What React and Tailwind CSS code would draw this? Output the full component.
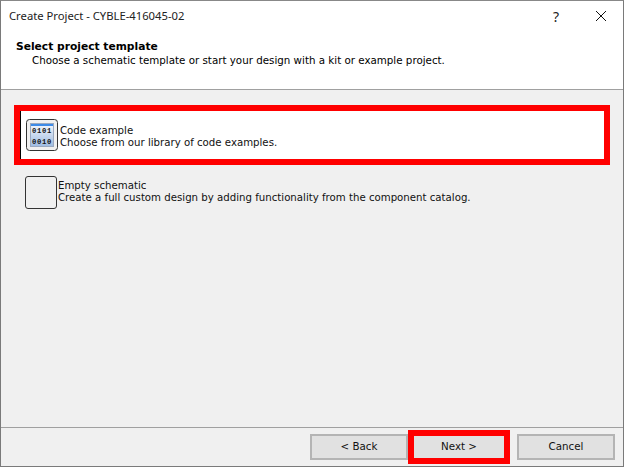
const ui = { fontFamily: '"DejaVu Sans", sans-serif' };

function CodeIcon() {
  return (
    <svg width="32" height="32" viewBox="0 0 32 32" className="shrink-0">
      <rect x="0.5" y="0.5" width="31" height="31" rx="3" fill="#f0f0f0" stroke="#333" />
      <defs>
        <linearGradient id="g" x1="0" y1="0" x2="0" y2="1">
          <stop offset="0" stopColor="#f6f8fc" />
          <stop offset="1" stopColor="#9dbbe2" />
        </linearGradient>
      </defs>
      <rect x="4.5" y="4.5" width="23" height="23" fill="url(#g)" stroke="#9aa9c0" />
      <rect x="5" y="5" width="22" height="2" fill="#3d8be8" />
      <text x="16" y="14" textAnchor="middle" fontSize="7.2" letterSpacing="0.7" fontWeight="700" fontFamily="Liberation Mono, monospace" fill="#111">0101</text>
      <text x="16" y="25" textAnchor="middle" fontSize="7.2" letterSpacing="0.7" fontWeight="700" fontFamily="Liberation Mono, monospace" fill="#111">0010</text>
    </svg>
  );
}

function Btn({ children, className = "" }) {
  return (
    <div className={"h-[26px] flex items-center justify-center border-2 border-[#b4b4b4] bg-[#e1e1e1] text-[10.3px] text-[#111] " + className}>
      {children}
    </div>
  );
}

export default function App() {
  return (
    <div style={ui} className="w-[624px] h-[467px] flex flex-col border border-[#7a7a7a] border-t-[#888] bg-[#f0f0f0] overflow-hidden">
      <div className="h-[30px] shrink-0 bg-white flex items-center pl-[8px] text-[11.25px] text-[#222]" style={{ fontFamily: '"Noto Sans", sans-serif' }}>
        <span className="flex-1">Create Project - CYBLE-416045-02</span>
        <span className="w-[16px] mr-[30px] text-center text-[14px]">?</span>
        <svg width="14" height="14" viewBox="0 0 14 14" className="mr-[15px]"><path d="M2 2l10 10M12 2L2 12" stroke="#111" strokeWidth="1" fill="none" /></svg>
      </div>
      <div className="h-[59px] shrink-0 bg-white border-b border-[#a0a0a0] pl-[15px] pt-[9px] text-[10.3px] leading-[13px] text-black">
        <div className="font-bold text-[10.7px] leading-[14px]">Select project template</div>
        <div className="pl-[16px]">Choose a schematic template or start your design with a kit or example project.</div>
      </div>
      <div className="flex-1 px-[13px] pt-[15px] text-[10.2px] leading-[12px] text-[#111]">
        <div className="h-[60px] border-[6px] border-[#ff0000] bg-white flex items-center pl-[6px]" style={{ boxShadow: "inset 1px 0 0 #000" }}>
          <CodeIcon />
          <div className="ml-[2px] pt-[4px]">
            <div>Code example</div>
            <div>Choose from our library of code examples.</div>
          </div>
        </div>
        <div className="flex items-center pl-[11px] pt-[11px]">
          <div className="w-[32px] h-[33px] rounded-[3px] border border-[#333] bg-[#f0f0f0] shrink-0" />
          <div className="ml-[1px] pb-[2px]">
            <div>Empty schematic</div>
            <div>Create a full custom design by adding functionality from the component catalog.</div>
          </div>
        </div>
      </div>
      <div className="h-[39px] shrink-0 border-t border-[#a0a0a0] flex items-center pl-[309px]">
        <Btn className="w-[98px]">&lt; Back</Btn>
        <div className="w-[102px] h-[34px] border-[6px] border-[#ff0000] flex items-center justify-center bg-[#e1e1e1] text-[10.3px] text-[#111]">Next &gt;</div>
        <Btn className="w-[98px] ml-[7px]">Cancel</Btn>
      </div>
    </div>
  );
}
